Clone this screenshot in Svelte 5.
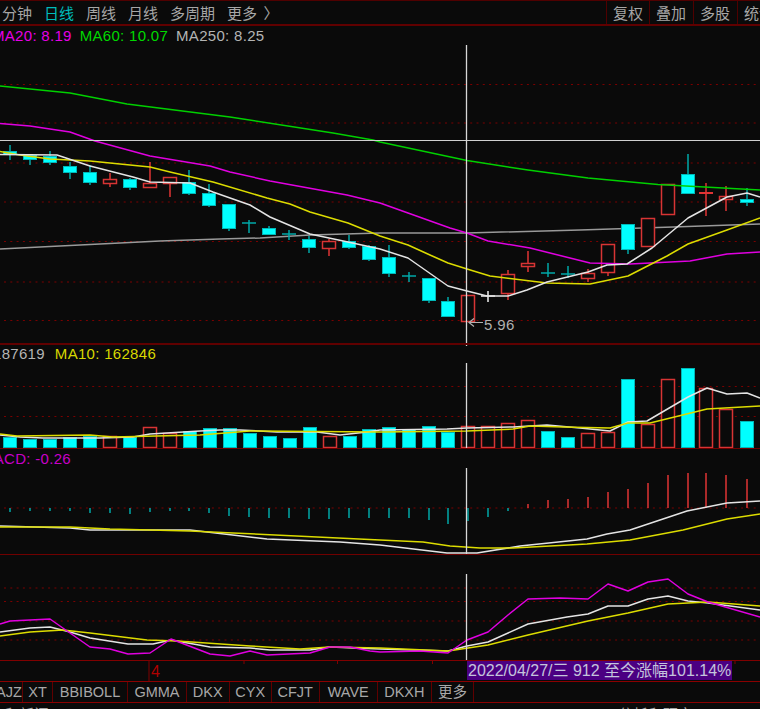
<script>
  const cross = 466.5;
  const candles = [
    [10,'c',151,154,145,160],[30,'c',155,159,154,165],[50,'c',156,162,151,165],[70,'c',166,172,162,179],
    [90,'c',172,182,165,185],[110,'r',179,183,173,187],[130,'c',179,187,178,190],[150,'r',183,187,162,187],
    [170,'r',177,183,177,197],[189,'c',182,193,170,195],[209,'c',193,205,184,207],[229,'c',204,228,204,231],
    [249,'d',223,223,220,233],[269,'c',228,234,226,235],[289,'d',234,234,230,240],[309,'c',239,247,236,253],
    [329,'r',241,248,239,256],[349,'c',241,247,235,249],[369,'c',246,259,245,261],[389,'c',257,273,245,277],
    [409,'d',276,276,272,282],[429,'c',278,300,278,303],[448,'c',301,316,297,317],[468,'r',295,321,295,321],
    [488,'w',296,296,291,302],[508,'r',274,293,270,300],[528,'r',263,266,251,272],[548,'d',273,273,263,277],
    [568,'d',274,274,266,278],[588,'r',273,278,269,282],[608,'r',244,272,244,276],[628,'c',224,249,224,254],
    [648,'r',218,246,218,246],[668,'r',184,214,184,214],[688,'c',174,193,154,194],[706,'f',192,193,183,216],
    [726,'r',196,199,186,211],[747,'c',199,202,188,206]
  ];
  const vols = [
    [10,'c',437],[30,'c',439],[50,'c',439],[70,'c',437],[90,'c',436],[110,'r',436],[130,'c',437],[150,'r',427],
    [170,'r',433],[190,'c',431],[210,'c',428],[230,'c',428],[250,'c',433],[270,'c',436],[290,'c',438],[310,'c',427],
    [330,'r',436],[350,'c',436],[369,'c',429],[389,'c',427],[409,'c',429],[429,'c',426],[448,'c',432],[468,'r',426],
    [488,'r',426],[508,'r',423],[528,'r',420],[548,'c',431],[568,'c',437],[588,'r',433],[608,'r',432],[628,'c',379],
    [648,'r',424],[668,'r',379],[688,'c',368],[706,'r',388],[726,'r',409],[747,'c',421]
  ];
  const macdBars = [
    [10,512],[30,511],[50,511],[70,511],[90,513],[110,513],[130,514],[150,512],[170,511],[189,511],[209,513],
    [229,516],[249,517],[269,518],[289,518],[309,519],[329,519],[349,518],[369,518],[389,518],[409,518],[429,520],
    [448,524],[468,521],[488,517],[508,511],[528,504],[548,500],[568,499],[588,497],[608,492],[628,489],[648,483],
    [668,475],[688,473],[706,473],[726,475],[747,479]
  ];
  const ma250 = '0,249 80,245 160,241 220,239 260,238 310,235 380,233 467,233 580,230 673,227 760,224';
  const ma60 = '0,86 70,93 127,104 230,117 333,133 373,140 380,142 467,160.5 528,170 588,178 658,184.5 760,190';
  const ma20 = '0,123.5 30,126 70,132 95,141 150,156 210,166 230,172 270,181 347,195 380,203 408,213 450,228 467,233 488,241 530,248 570,258 590,263 630,264 690,261 727,254 760,252';
  const ma10 = '0,151.6 20,155 50,159 90,161 120,164 150,167 170,172 213,182 267,198 290,204 310,212 348,223 380,236 408,245 430,255 448,263 467,269 490,276 547,283 590,284 628,276 667,256 688,244 727,230 760,218';
  const ma5 = '0,154.5 57,155 90,166 133,177 150,182 190,183 213,192 250,205 270,217 310,234 348,242 380,249 408,258 448,286 467,291 487,296 508,296 527,290 547,282 588,272 607,265 627,264 652,248 688,218 727,197 747,193 760,197';
  const volW = '0,435 20,437 43,438 100,438 133,437 150,434 200,431 220,430 240,430 277,432 317,432 340,435 367,432 380,430 447,429 467,428 513,427 547,425 580,428 610,431 628,422 647,421 688,397 707,388 727,394 747,393 760,398';
  const volY = '0,434 17,436 90,435 113,437 200,435 250,431 380,432 467,431 513,429 530,426 563,427 610,428 628,423 650,423 707,409 760,406';
  const difW = '0,526 70,528 90,530 190,530 267,539 340,542 380,545 447,553 477,553 520,546 587,539 607,534 630,530 687,511 727,503 760,501';
  const deaY = '0,527 70,527 110,529 190,531 233,533 380,540 423,542 450,546 480,548 513,548 587,544 630,540 683,530 727,519 760,514';
  const kdjJ = '0,624 10,621 50,619 90,647 110,649 128,654 150,653 171,639 210,654 230,656 250,651 267,655 310,653 330,647 350,647 370,651 380,652 420,651 448,653 467,640 488,632 508,615 528,599 560,598 588,599 608,584 628,591 648,582 668,579 688,594 708,602 760,617';
  const kdjK = '0,632 30,628 50,627 70,632 90,638 128,644 153,644 171,640 210,647 250,648 270,650 310,650 330,647 380,649 448,651 467,646 488,642 528,624 567,617 588,614 608,606 628,606 648,599 668,596 688,601 708,603 760,610';
  const kdjD = '0,636 30,632 63,630 90,633 147,640 177,641 250,646 300,649 330,647 380,648 448,651 488,645 528,635 588,621 628,613 668,604 708,602 760,606';

  const tabs = [['AJZ',27],['XT',30],['BBIBOLL',75],['GMMA',59],['DKX',42.5],['CYX',42.5],['CFJT',47.5],['WAVE',58.5],['DKXH',53.7],['更多',42.6]];
  const ticks = [244, 337.5, 432.5, 735];
</script>

{#snippet dots(ys, x0 = 4)}
  {#each ys as y}
    <line class="dot" x1={x0} x2="760" y1={y} y2={y} />
  {/each}
{/snippet}

{#snippet crossline(y1, y2)}
  <line class="cross" x1={cross} x2={cross} {y1} {y2} />
{/snippet}

<div class="screen">
  <header class="topbar">
    <nav class="periods">
      <span class="clip">分钟</span>
      <span class="on">日线</span>
      <span>周线</span>
      <span>月线</span>
      <span>多周期</span>
      <span>更多 <i class="chev">〉</i></span>
    </nav>
    <div class="actions">
      <span class="a1">复权</span>
      <span class="a2">叠加</span>
      <span class="a3">多股</span>
      <span class="a4">统计</span>
    </div>
  </header>

  <section class="panel main">
    <div class="legend">
      <span class="mag">MA20: 8.19</span><span class="grn">MA60: 10.07</span><span class="gry">MA250: 8.25</span>
    </div>
    <svg viewBox="0 26 760 317" width="760" height="317">
      {@render dots([84.5, 123, 163, 202, 241.5, 282, 320.5])}
      <polyline class="l gray" points={ma250} />
      {#each candles as [x, t, top, bot, hi, lo]}
        {#if t === 'c'}
          <line class="wick teal" x1={x} x2={x} y1={hi} y2={lo} />
          <rect class="body cyan" x={x - 6.5} y={top + 0.5} width="13" height={bot - top} />
        {:else if t === 'r' || t === 'f'}
          <line class="wick red" x1={x} x2={x} y1={hi} y2={lo} />
          <rect class={t === 'f' ? 'body solid' : 'body hollow'} x={x - 6.5} y={top + 0.5} width="13" height={bot - top} />
        {:else}
          <line class={t === 'w' ? 'wick wht' : 'wick teal'} x1={x} x2={x} y1={hi} y2={lo} />
          <line class={t === 'w' ? 'wick wht' : 'wick teal'} x1={x - 7} x2={x + 7} y1={top} y2={top} />
        {/if}
      {/each}
      <polyline class="l green" points={ma60} />
      <polyline class="l magenta" points={ma20} />
      <polyline class="l yellow" points={ma10} />
      <polyline class="l white" points={ma5} />
      <line class="hair" x1="0" x2="760" y1="140.5" y2="140.5" />
      {@render crossline(45, 343)}
      <path class="arrow" d="M469 322.5H483M474 318.5L469 322.5L474 326.5" />
      <text class="price" x="484" y="330">5.96</text>
    </svg>
  </section>

  <section class="panel vol">
    <div class="legend vlegend">
      <span class="gry">187619</span><span class="yel">MA10: 162846</span>
    </div>
    <svg viewBox="0 345 760 103" width="760" height="103">
      {@render dots([386.5, 416.5])}
      {#each vols as [x, t, top]}
        <rect class={t === 'c' ? 'body cyan' : 'body hollow'} x={x - 6.5} y={top + 0.5} width="13" height={447 - top} />
      {/each}
      <polyline class="l white" points={volW} />
      <polyline class="l yellow" points={volY} />
      {@render crossline(345, 346)}
      {@render crossline(363, 448)}
    </svg>
  </section>

  <section class="panel macd">
    <div class="legend mlegend"><span class="mag2">MACD: -0.26</span></div>
    <svg viewBox="0 449 760 105" width="760" height="105">
      {@render dots([508])}
      {#each macdBars as [x, y]}
        <line class={y > 508 ? 'mbar teal' : 'mbar red'} x1={x} x2={x} y1="508" y2={y} />
      {/each}
      <polyline class="l white" points={difW} />
      <polyline class="l yellow" points={deaY} />
      {@render crossline(468, 554)}
    </svg>
  </section>

  <section class="panel kdj">
    <svg viewBox="0 555 760 105" width="760" height="105">
      {@render dots([588, 601.5, 621, 640])}
      <polyline class="l white" points={kdjK} />
      <polyline class="l yellow" points={kdjD} />
      <polyline class="l magenta" points={kdjJ} />
      {@render crossline(574, 660)}
    </svg>
  </section>

  <section class="axis">
    <svg class="ticks" viewBox="0 661 760 20" width="760" height="20">
      <line class="tick" x1="149" x2="149" y1="661" y2="681" />
      {#each ticks as x}
        <line class="tick" x1={x} x2={x} y1="661" y2="664" />
      {/each}
      <text class="year" x="151" y="677">4</text>
    </svg>
    <div class="datebox">2022/04/27/三 912 至今涨幅101.14%</div>
  </section>

  <footer class="tabs">
    {#each tabs as [label, w]}
      <span class="tab" style="width:{w}px">{label}</span>
    {/each}
  </footer>

  <div class="below">
    <span>和新闻</span>
    <span class="r">分析和研究</span>
  </div>
</div>

<style>
  :global(body) { margin: 0; background: #0a0a0a; }
  .screen {
    width: 760px; height: 709px; overflow: hidden; background: #0a0a0a;
    display: flex; flex-direction: column;
    font-family: "Liberation Sans", "Noto Sans CJK SC", sans-serif;
  }
  .topbar {
    height: 23px; flex: none; display: flex; justify-content: space-between; align-items: center;
    border-top: 1px solid #500000; border-bottom: 2px solid #600000;
    font-family: "Noto Sans CJK SC", sans-serif; font-size: 15px; color: #a6a6a6;
    overflow: hidden;
  }
  .periods { display: flex; gap: 12px; padding-left: 2px; white-space: nowrap; }
  .periods .on { color: #00bcbc; }
  .chev { font-style: normal; margin-left: 3px; }
  .actions { display: flex; height: 100%; width: 153px; flex: none; border-left: 1px solid #500000; }
  .actions span {
    display: block; box-sizing: border-box; white-space: nowrap; overflow: hidden;
    border-left: 1px solid #500000; line-height: 23px; padding-left: 6px;
  }
  .actions .a1 { border-left: 0; width: 42px; }
  .actions .a2 { width: 44px; }
  .actions .a3 { width: 44px; }
  .actions .a4 { width: 23px; padding-left: 6px; }

  .panel { position: relative; flex: none; }
  .panel svg { display: block; }
  .main { height: 317px; border-bottom: 2px solid #600000; }
  .vol { height: 103px; border-bottom: 1px solid #700000; }
  .macd { height: 105px; border-bottom: 1px solid #700000; }
  .kdj { height: 105px; border-bottom: 1px solid #800000; }

  .legend {
    position: absolute; left: -8px; top: 1px; height: 18px; line-height: 18px;
    font-size: 15px; letter-spacing: 0.3px; white-space: nowrap; display: flex; gap: 8px;
  }
  .vlegend { left: -7px; top: 0; gap: 10px; }
  .mlegend { left: -19px; top: 1px; }
  .mag { color: #e600e6; }
  .mag2 { color: #c800c8; }
  .grn { color: #00d800; }
  .gry { color: #b4b4b4; }
  .yel { color: #d8d800; }

  .dot { stroke: #7a0000; stroke-width: 1; stroke-dasharray: 2 4.3; }
  .l { fill: none; stroke-width: 1.5; stroke-linejoin: round; }
  .gray { stroke: #999; }
  .green { stroke: #00d000; }
  .magenta { stroke: #e000e0; }
  .yellow { stroke: #dcdc00; }
  .white { stroke: #e4e4e4; }
  .hair { stroke: #d0d0d0; stroke-width: 1.2; }
  .cross { stroke: #d8d8d8; stroke-width: 1.3; }
  .wick { stroke-width: 1.5; }
  .wick.teal, .mbar.teal { stroke: #00a8a8; }
  .wick.red, .mbar.red { stroke: #e03434; }
  .wick.wht { stroke: #f0f0f0; }
  .mbar { stroke-width: 1.5; }
  .body { stroke-width: 1; }
  .cyan { fill: #00ffff; stroke: #00b8b8; }
  .hollow { fill: #0a0a0a; stroke: #d83434; stroke-width: 1.5; }
  .solid { fill: #e03434; stroke: #e03434; }
  .arrow { fill: none; stroke: #b0b0b0; stroke-width: 1.2; }
  .price { fill: #b0b0b0; font-size: 15px; letter-spacing: 0.35px; }

  .axis { position: relative; height: 20px; flex: none; border-bottom: 1px solid #8b0000; }
  .ticks { display: block; }
  .tick { stroke: #800000; stroke-width: 1; }
  .year { fill: #b00000; font-size: 16px; }
  .datebox {
    position: absolute; left: 467px; top: 0; width: 265px; height: 19px; line-height: 19px;
    background: #4b0082; color: #c4c4dc; font-size: 16px; white-space: nowrap; overflow: hidden;
    padding-left: 1px; box-sizing: border-box;
  }

  .tabs { height: 20px; flex: none; display: flex; border-bottom: 1px solid #8b0000; }
  .tab {
    flex: none; box-sizing: border-box; border-right: 1px solid #600000; color: #a8a8a8;
    font-size: 14.5px; line-height: 20px; text-align: center; white-space: nowrap;
  }
  .tab:first-child { margin-left: -4px; }
  .below {
    flex: none; height: 6px; display: flex; justify-content: space-between; overflow: hidden;
    font-family: "Noto Sans CJK SC", sans-serif; font-size: 15px; line-height: 21px; color: #a0a0a0;
    padding: 0 67px 0 4px;
  }
  .below span { display: block; }
</style>
